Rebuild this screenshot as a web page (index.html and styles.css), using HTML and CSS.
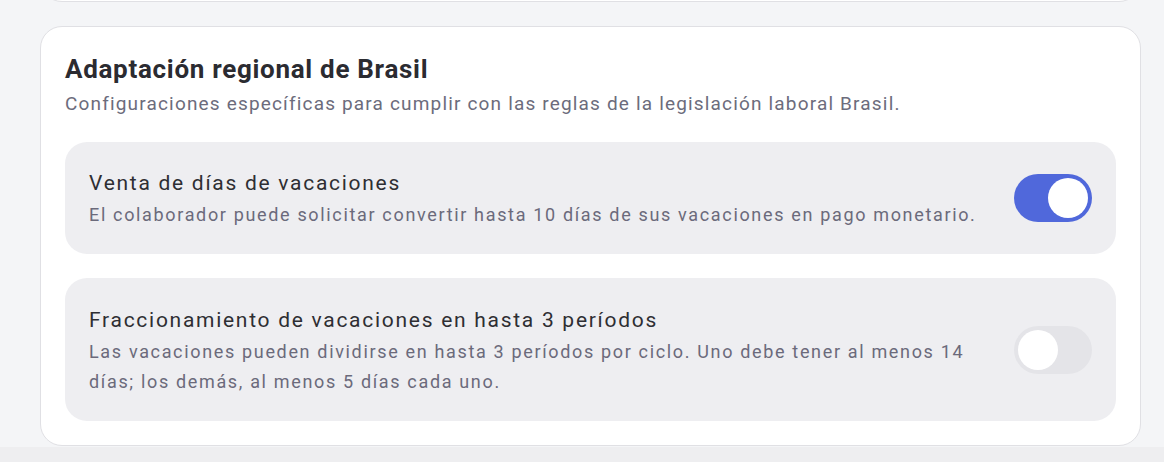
FILE: index.html
```html
<!DOCTYPE html>
<html lang="es">
<head>
    <meta charset="UTF-8">
    <meta name="viewport" content="width=device-width, initial-scale=1.0">
    <title>Adaptación regional</title>
    <link rel="stylesheet" href="styles.css">
</head>
<body>
    <div class="page">
        <div class="card card-prev"></div>

        <div class="card">
            <h2>Adaptación regional de Brasil</h2>
            <p class="subtitle">Configuraciones específicas para cumplir con las reglas de la legislación laboral Brasil.</p>

            <div class="setting">
                <div class="setting-text">
                    <h3>Venta de días de vacaciones</h3>
                    <p>El colaborador puede solicitar convertir hasta 10 días de sus vacaciones en pago monetario.</p>
                </div>
                <div class="switch on"><span class="knob"></span></div>
            </div>

            <div class="setting">
                <div class="setting-text">
                    <h3>Fraccionamiento de vacaciones en hasta 3 períodos</h3>
                    <p>Las vacaciones pueden dividirse en hasta 3 períodos por ciclo. Uno debe tener al menos 14 días; los demás, al menos 5 días cada uno.</p>
                </div>
                <div class="switch"><span class="knob"></span></div>
            </div>
        </div>
    </div>
    <div class="bottom-bar"></div>
</body>
</html>
```

FILE: styles.css
```css
body {
    margin: 0;
    padding: 0;
    background-color: #EEEEF0;
    font-family: Roboto, "Liberation Sans", sans-serif;
    overflow: hidden;
}

.page {
    background-color: #F4F5F7;
    padding: 0 23px 1px 40px;
    display: flex;
    flex-direction: column;
    gap: 24px;
}

.card {
    background-color: #FFFFFF;
    border: 1px solid #E0E0E4;
    border-radius: 22px;
    padding: 24px;
}

.card-prev {
    height: 60px;
    margin-top: -60px;
    padding: 0;
}

h2 {
    margin: 0;
    font-size: 26px;
    font-weight: 700;
    letter-spacing: 0.7px;
    color: #2B2B31;
    line-height: 36px;
}

.subtitle {
    margin: 3px 0 24px 0;
    font-size: 19px;
    letter-spacing: 1.17px;
    line-height: 28px;
    color: #6C6C7C;
}

.setting {
    background-color: #EEEEF1;
    border-radius: 22px;
    padding: 24px;
    display: flex;
    align-items: center;
    gap: 32px;
    margin-bottom: 24px;
}

.setting:last-child {
    margin-bottom: 0;
    padding-top: 25px;
}

.setting-text {
    flex: 1;
}

h3 {
    margin: 0;
    font-size: 21px;
    font-weight: 400;
    letter-spacing: 1.72px;
    line-height: 34px;
    color: #2E2E33;
}

.setting-text p {
    margin: 0;
    font-size: 18px;
    letter-spacing: 1.66px;
    line-height: 30px;
    color: #6B6A7B;
}

.switch {
    width: 78px;
    height: 48px;
    border-radius: 24px;
    background-color: #E4E4E8;
    box-sizing: border-box;
    padding: 4px;
    display: flex;
    flex-shrink: 0;
}

.switch.on {
    background-color: #5068DB;
    justify-content: flex-end;
}

.knob {
    width: 40px;
    height: 40px;
    border-radius: 50%;
    background-color: #FFFFFF;
}

.bottom-bar {
    height: 20px;
}
```
